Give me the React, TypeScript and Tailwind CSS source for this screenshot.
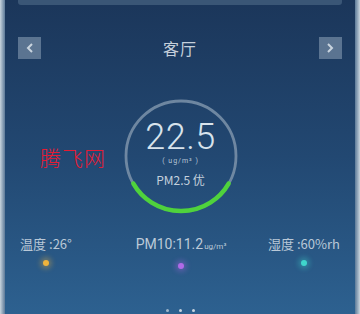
import React from "react";

const cjk = { fontFamily: '"Noto Sans CJK SC", "Noto Sans", sans-serif' };
const num = { fontFamily: 'Roboto, "Noto Sans", "Noto Sans CJK SC", sans-serif' };

function Gauge() {
  const r = 55;
  const c = 58;
  const a1 = (150 * Math.PI) / 180;
  const a2 = (30 * Math.PI) / 180;
  const x1 = c + r * Math.cos(a1);
  const y1 = c + r * Math.sin(a1);
  const x2 = c + r * Math.cos(a2);
  const y2 = c + r * Math.sin(a2);
  return (
    <div className="relative w-[116px] h-[116px] flex flex-col items-center">
      <svg className="absolute inset-0" width="116" height="116" viewBox="0 0 116 116">
        <circle cx={c} cy={c} r={r} fill="none" stroke="#7d93aa" strokeOpacity="0.85" strokeWidth="2.8" />
        <path
          d={`M ${x1} ${y1} A ${r} ${r} 0 0 0 ${x2} ${y2}`}
          fill="none"
          stroke="#4fd23c"
          strokeWidth="4.5"
          strokeLinecap="round"
        />
      </svg>
      <div className="mt-[21px] text-[36px] leading-[36px] font-light text-[#d8e3ec] tracking-[0.5px]" style={num}>
        22.5
      </div>
      <div className="mt-[2px] text-[7px] leading-[9px] text-[#b8c7d6] tracking-[1px]" style={num}>
        ( ug/m³ )
      </div>
      <div className="mt-[7px] text-[12px] leading-[14px] text-[#c3d0dc]" style={cjk}>
        PM2.5 优
      </div>
    </div>
  );
}

function Dot({ color }: { color: string }) {
  return (
    <div
      className="w-[6px] h-[6px] rounded-full mt-[9px]"
      style={{ backgroundColor: color, boxShadow: `0 0 5px 3px ${color}55` }}
    />
  );
}

export default function App() {
  return (
    <div className="w-[360px] h-[314px] flex overflow-hidden" style={cjk}>
      <div className="w-[5px] h-full bg-gradient-to-r from-[#c9d5de] to-[#5d7a98]" />
      <div className="relative flex-1 h-full flex flex-col px-[13px] bg-gradient-to-b from-[#1b365a] via-[#224872] to-[#2d6190]">
        <div className="h-[5px] rounded-b-[3px] bg-[#3a5676]" />
        <div className="mt-[32px] h-[22px] flex items-center justify-between">
          <div className="w-[23px] h-[22px] bg-[#5b7491] flex items-center justify-center">
            <svg width="10" height="12" viewBox="0 0 10 12">
              <path d="M7 2 L3 6 L7 10" fill="none" stroke="#c9d4df" strokeWidth="2" />
            </svg>
          </div>
          <div className="text-[16px] leading-[20px] text-[#c5d0db] tracking-[1px]">客厅</div>
          <div className="w-[23px] h-[22px] bg-[#5b7491] flex items-center justify-center">
            <svg width="10" height="12" viewBox="0 0 10 12">
              <path d="M3 2 L7 6 L3 10" fill="none" stroke="#c9d4df" strokeWidth="2" />
            </svg>
          </div>
        </div>
        <div className="mt-[39px] flex justify-center pl-[1px]">
          <Gauge />
        </div>
        <div className="absolute left-[35px] top-[145px] text-[21px] leading-[24px] text-[#e51c34] tracking-[1px]" style={{ fontFamily: '"Noto Sans CJK SC", serif', fontWeight: 300 }}>
          腾飞网
        </div>
        <div className="mt-[23px] flex items-start">
          <div className="flex flex-col items-center w-[56px]">
            <div className="text-[13px] leading-[14px] text-[#b9c8d7] whitespace-nowrap">温度 :26°</div>
            <Dot color="#f0b43c" />
          </div>
          <div className="flex flex-col items-center ml-[55px] w-[104px]">
            <div className="text-[14px] leading-[14px] text-[#bccad8] whitespace-nowrap" style={num}>
              PM10:11.2<span className="text-[8px] ml-[1px]">ug/m³</span>
            </div>
            <Dot color="#b06ae8" />
          </div>
          <div className="flex flex-col items-center w-[76px] ml-auto">
            <div className="text-[13px] leading-[14px] text-[#b9c8d7] whitespace-nowrap">湿度 :60%rh</div>
            <Dot color="#3fd6cc" />
          </div>
        </div>
        <div className="flex-1" />
        <div className="flex justify-center gap-[10px] mb-[2px]">
          <div className="w-[3px] h-[3px] rounded-full bg-[#9fb6cb]" />
          <div className="w-[3px] h-[3px] rounded-full bg-[#c6d4e0]" />
          <div className="w-[3px] h-[3px] rounded-full bg-[#c6d4e0]" />
        </div>
      </div>
      <div className="w-[5px] h-full bg-gradient-to-l from-[#c9d5de] to-[#5d7a98]" />
    </div>
  );
}
